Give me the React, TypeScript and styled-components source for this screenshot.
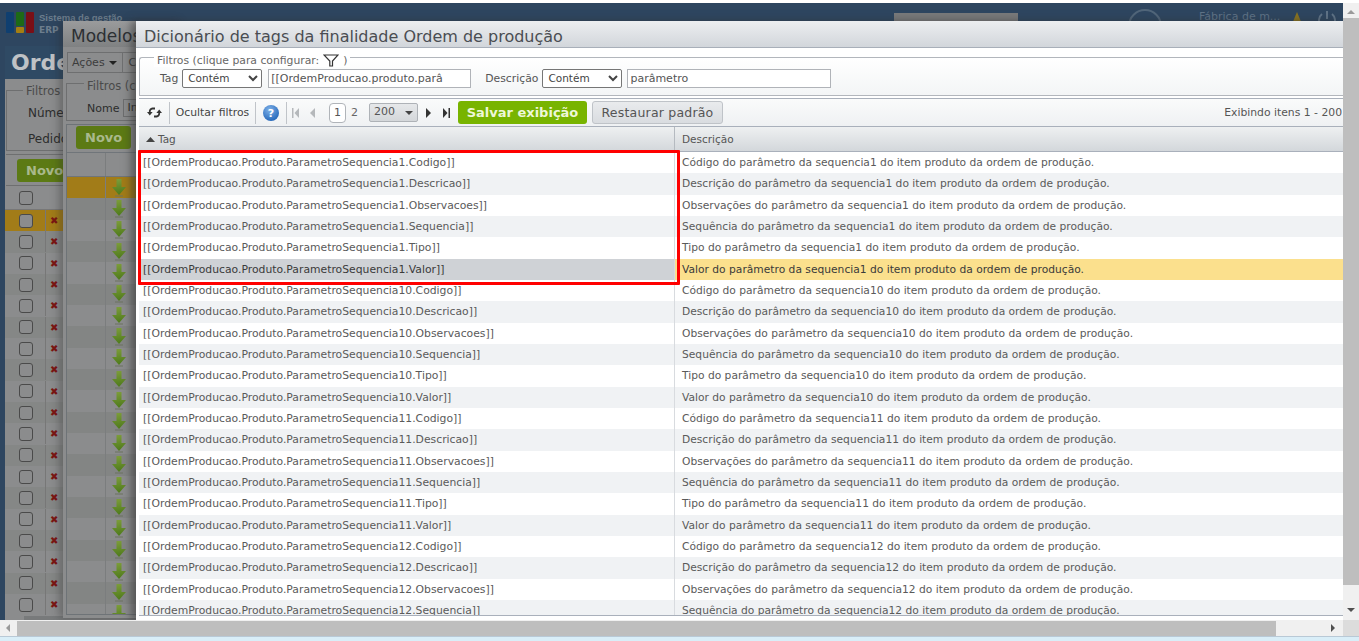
import React from "react";
import styled, { createGlobalStyle } from "styled-components";

const Global = createGlobalStyle`
  html, body { margin: 0; padding: 0; height: 100%; overflow: hidden; background: #fff; }
  body { font-family: "DejaVu Sans", Verdana, sans-serif; font-size: 11px; color: #555; }
  * { box-sizing: border-box; }
`;

const Screen = styled.div`
  width: 1359px; height: 641px; display: flex; flex-direction: column; overflow: hidden; background: #fff;
`;
const MainArea = styled.div`display: flex; flex: 1; min-height: 0;`;
const Viewport = styled.div`
  position: relative; flex: 1; margin-top: 3px; overflow: hidden; background: #2e4660;
`;

/* dimmed background page */
const TopBar = styled.div`
  height: 43px; display: flex; align-items: flex-start; padding: 9px 0 0 6px; gap: 5px; position: relative;
`;
const Logo = styled.div`display: flex; gap: 2px;`;
const LogoBar = styled.div<{ $c: string }>`width: 8px; height: 21px; border-radius: 1px; background: ${p => p.$c};`;
const LogoSplit = styled.div`
  width: 8px; height: 21px; display: flex; flex-direction: column; gap: 1px;
  i { display: block; flex: 1; background: #1d6a16; border-radius: 1px; }
  b { display: block; height: 6px; background: #a57f12; border-radius: 1px; }
`;
const Brand = styled.div`
  color: #6d7e8e; font-family: "Liberation Sans", sans-serif; font-weight: bold; font-size: 9.500px; line-height: 12px;
  strong { display: block; font-family: "DejaVu Sans", sans-serif; font-size: 9px; }
`;
const SearchStub = styled.div`
  position: absolute; left: 894px; top: 10px; width: 124px; height: 18px; background: #797a7b;
`;
const GlobeStub = styled.div`
  position: absolute; left: 1128px; top: 6px; width: 34px; height: 34px; border: 2px solid #51667a; border-radius: 50%;
`;
const Factory = styled.div`
  position: absolute; left: 1199px; top: 7px; color: #5f7387; font-size: 11px;
`;
const TopIcons = styled.svg`position: absolute; left: 1288px; top: 7px;`;

const BgPage = styled.div`
  margin-left: 5px; height: 100%; background: #8b8c8d; overflow: hidden;
`;
const PageTitle = styled.div`
  height: 33px; background: #2f4a64; color: #bfc2c5; font-size: 22px; font-weight: bold; line-height: 33px; padding-left: 6px;
`;
const BgFilter = styled.div`
  margin: 11px 0 0 1px; height: 61px; border: 1px solid #6e6f70; position: relative; padding: 9px 0 0 21px; color: #2c2c2c; font-size: 12px; line-height: 26px;
  span { position: absolute; left: 16px; top: -7px; line-height: 14px; background: #8b8c8d; padding: 0 3px; color: #4a4a4a; font-size: 11.500px; }
`;
const BgToolbar = styled.div`margin-top: 3px; padding: 4px 0 3px 11px; border-bottom: 1px solid #6e6f70; border-top: 1px solid #6e6f70; margin-left: 1px;`;
const GreenBtn = styled.div`
  display: block; width: 55px; height: 23px; border-radius: 3px; background: #5c7a14; color: #a9b98c;
  font-size: 13px; font-weight: bold; line-height: 23px; padding-left: 9px;
`;
const BgHead = styled.div`height: 24px; border-bottom: 1px solid #777; display: flex; align-items: center; padding-left: 14px;`;
const BgBox = styled.span`
  display: inline-block; flex: none; width: 14px; height: 14px; border: 1px solid #4a4a4a; border-radius: 3px; background: #8b8c8d;
`;
const BgRow = styled.div<{ $i: number; $sel?: boolean }>`
  height: 21.33px; display: flex; align-items: center; padding-left: 14px;
  background: ${p => p.$sel ? "#a27c18" : p.$i % 2 ? "#858786" : "#8b8c8d"};
`;
const RedX = styled.span`
  margin-left: 12px; padding-left: 4px; height: 21px; line-height: 21px; border-left: 1px solid #777;
  color: #7c1512; font-size: 10px; font-weight: bold;
`;
const BgFooter = styled.div`margin: 1px 0 0 19px; height: 6px; background: #787a7b;`;

/* background window */
const WindowBack = styled.div`
  position: absolute; left: 63px; top: 18px; width: 120px; height: 597px; background: #8b8c8d;
  box-shadow: -4px 0 8px rgba(40,40,40,.35); overflow: hidden;
`;
const BackTitle = styled.div`
  height: 26px; background: linear-gradient(#9a9b9c, #7f8182); color: #2c2f33; font-size: 17px; line-height: 31px; padding-left: 8px; white-space: nowrap;
`;
const BackActions = styled.div`
  margin: 5px 0 0 4px; height: 21px; border: 1px solid #6e6f70; color: #3c3c3c; font-size: 11px; padding-left: 4px; white-space: nowrap;
  display: flex; align-items: center;
`;
const Caret = styled.i`
  margin: 0 0 0 4px; border: 4px solid transparent; border-top: 4px solid #222; border-bottom: none; width: 8px; height: 4px;
`;
const ActionSep = styled.span`margin-left: 5px; height: 19px; padding-left: 6px; line-height: 19px; border-left: 1px solid #6e6f70;`;
const BackFilter = styled.div`
  margin: 10px 0 0 3px; height: 38px; border: 1px solid #6e6f70; position: relative; padding: 12px 0 0 20px; color: #2c2c2c; font-size: 11px; white-space: nowrap;
  display: flex; align-items: center; gap: 4px;
  span { position: absolute; left: 17px; top: -5px; background: #8b8c8d; padding: 0 3px; color: #4a4a4a; font-size: 11.500px; }
`;
const BackInput = styled.b`
  font-weight: normal; width: 30px; height: 18px; border: 1px solid #6c6d6e; padding-left: 3px; line-height: 16px;
`;
const BackTable = styled.div`
  margin: 3px 0 0 3px; height: 491px; overflow: hidden; border: 1px solid #6e7377; border-right: none;
`;
const BackTool = styled.div`padding: 1px 0 3px 9px; height: 27px;`;
const BackRow = styled.div<{ $i: number; $sel?: boolean }>`
  height: 21.33px; display: flex; align-items: center;
  background: ${p => p.$sel ? "#a27c18" : p.$i % 2 ? "#838584" : "#8b8c8d"};
`;
const BackCell = styled.div`
  flex: none; width: 39px; height: 100%; border-right: 1px solid #7b7d7e; margin-right: 6px;
`;
const BackHead = styled.div`height: 25px; border-top: 1px solid #70757a; border-bottom: 1px solid #70757a; display: flex;`;

/* main window */
const Dialog = styled.div`
  position: absolute; left: 136px; top: 18px; right: 0; height: 599px; background: #fff;
  box-shadow: -5px 0 8px rgba(45,45,45,.55); display: flex; flex-direction: column; overflow: hidden;
`;
const TitleBar = styled.div`
  height: 27px; flex: none; padding-left: 8px; background: linear-gradient(#eceef0, #d2d6db); border-bottom: 1px solid #a8afb9;
  color: #4a4d52; font-size: 16px; line-height: 31px; white-space: nowrap;
`;
const Body = styled.div`flex: 1; min-height: 0; padding: 9px 0 4px 3px; display: flex; flex-direction: column;`;
const FilterBox = styled.div`
  flex: none; position: relative; height: 39px; border: 1px solid #b2b6bc; border-right: none; border-radius: 3px 0 0 0;
  background: linear-gradient(#fff, #f3f5f6); display: flex; align-items: center; padding: 3px 0 0 20px;
`;
const Legend = styled.div`
  position: absolute; left: 14px; top: -4px; padding: 0 3px; background: #fff; line-height: 12px; color: #666; font-size: 10.800px;
  display: flex; align-items: center; gap: 4px;
`;
const FieldLabel = styled.label<{ $gap?: number }>`color: #555; font-size: 10.800px; margin: 0 4px 0 ${p => p.$gap || 0}px;`;
const OpSelect = styled.select`
  width: 80px; height: 19px; font: 10.500px "DejaVu Sans", sans-serif; color: #444; border: 1px solid #767676; border-radius: 2px;
  background: #fff; padding: 0 0 0 1px; margin: 0;
`;
const TextInput = styled.input<{ $w: number; $gap: number }>`
  width: ${p => p.$w}px; height: 19px; margin-left: ${p => p.$gap}px; font: 11px "DejaVu Sans", sans-serif; color: #555; border: 1px solid #b0b3b8;
  padding: 0 2px; background: #fff; outline: none;
`;
const Toolbar = styled.div`
  flex: none; height: 29px; margin-top: 2px; border-top: 1px solid #a9b0bb; border-bottom: 1px solid #a9b0bb;
  background: linear-gradient(#fafbfb, #eff1f3); display: flex; align-items: center; position: relative;
`;
const ToolCell = styled.div<{ $w: number }>`
  width: ${p => p.$w}px; height: 22px; flex: none; border-right: 1px solid #c0c4c9; display: flex; align-items: center; justify-content: center;
  color: #444; font-size: 10.800px; white-space: nowrap;
`;
const PagerIcon = styled.svg<{ $gap: number }>`flex: none; margin-left: ${p => p.$gap}px;`;
const PageBox = styled.div`
  width: 17px; height: 20px; margin-left: 12px; flex: none; border: 1px solid #b0b4b9; border-radius: 4px; background: #fff; color: #555;
  text-align: center; line-height: 18px; font-size: 11px;
`;
const PageNum = styled.span`margin-left: 5px; width: 10px; color: #666; font-size: 11px;`;
const SizeBox = styled.div`
  width: 49px; height: 19px; margin-left: 8px; flex: none; border: 1px solid #aeb2b7; border-radius: 2px; background: linear-gradient(#e6e8ea,#d4d7da);
  color: #555; font-size: 11px; line-height: 15px; padding-left: 4px; position: relative;
  &:after { content: ""; position: absolute; right: 4px; top: 7px; border: 4px solid transparent; border-top: 4px solid #444; border-bottom: none; }
`;
const SaveBtn = styled.button`
  width: 129px; height: 23px; margin-left: 8px; flex: none; border: none; border-radius: 3px; background: #78b400; color: #eef7d8;
  font: bold 13px "DejaVu Sans", sans-serif; padding: 0;
`;
const ResetBtn = styled.button`
  width: 131px; height: 23px; margin-left: 5px; flex: none; border: 1px solid #bfc3c8; border-radius: 3px; background: linear-gradient(#e9ebed,#d9dce0); color: #555;
  font: 12.500px "DejaVu Sans", sans-serif; padding: 0; letter-spacing: .2px;
`;
const Info = styled.div`margin-left: auto; padding-right: 1px; color: #555; font-size: 10.800px; white-space: nowrap;`;

const Grid = styled.div`flex: 1; min-height: 0; overflow: hidden; border-bottom: 1px solid #a9b0bb;`;
const HeadRow = styled.div`
  height: 25px; display: grid; grid-template-columns: 536px 1fr; background: linear-gradient(#eef0f1, #d3d7db); border-bottom: 1px solid #a9b0bb;
`;
const HeadCell = styled.div`
  display: flex; align-items: center; gap: 3px; padding-left: 7px; color: #555; font-size: 10.500px; border-right: 1px solid #b5bac0;
  &:last-child { border-right: none; }
`;
const Row = styled.div<{ $odd: boolean }>`
  height: 21.33px; display: grid; grid-template-columns: 536px 1fr; background: ${p => p.$odd ? "#f0f2f4" : "#fff"};
`;
const Cell = styled.div<{ $bg?: string }>`
  padding-left: 4px; line-height: 22px; white-space: nowrap; overflow: hidden; font-size: 10.800px; color: ${p => p.$bg ? "#3a3a3a" : "#5a5a5a"};
  background: ${p => p.$bg || "transparent"}; border-right: 1px solid #d8dbdf;
  &:last-child { border-right: none; padding-left: 7px; font-size: 10.700px; }
`;
const Highlight = styled.div`
  position: absolute; left: 2px; top: 129px; width: 542px; height: 135px; border: 3px solid #f00; pointer-events: none; border-radius: 1px;
`;

/* browser scrollbars */
const VScroll = styled.div`
  width: 16px; flex: none; margin-top: 3px; background: #f0f0f0; display: flex; flex-direction: column; align-items: center;
`;
const VThumb = styled.div`width: 16px; height: 567px; background: #bebebe; margin: 4px 0 auto; flex: none;`;
const ArrowUp = styled.div`
  margin-top: 7px; border: 4px solid transparent; border-bottom: 4px solid #9a9a9a; border-top: none; width: 8px; height: 4px; flex: none;
`;
const ArrowDown = styled.div`
  margin-bottom: 8px; border: 4px solid transparent; border-top: 4px solid #505050; border-bottom: none; width: 8px; height: 4px; flex: none;
`;
const HScroll = styled.div`height: 16px; flex: none; background: #f0f0f0; display: flex; align-items: center;`;
const HThumb = styled.div`margin-left: 17px; width: 1259px; height: 15px; background: #bebebe;`;
const ArrowLeft = styled.div`
  position: absolute; margin-left: 6px; border: 4px solid transparent; border-right: 4px solid #9a9a9a; border-left: none; width: 4px; height: 8px;
`;
const ArrowRight = styled.div`
  margin-left: 55px; border: 4px solid transparent; border-left: 4px solid #505050; border-right: none; width: 4px; height: 8px;
`;
const Corner = styled.div`margin-left: auto; width: 16px; height: 16px; background: #dcdcdc;`;
const Strip = styled.div`height: 5px; flex: none; background: #d9eef8; border-top: 1px solid #b9c9d6;`;

const DownArrow = ({ id }: { id: string }) => (
  <svg width="14" height="18" viewBox="0 0 14 18">
    <defs>
      <linearGradient id={id} x1="0" y1="0" x2="0" y2="1">
        <stop offset="0" stopColor="#7c9c3a" />
        <stop offset="1" stopColor="#4d7a1a" />
      </linearGradient>
    </defs>
    <path d="M4.500 0h5v8H14l-7 8-7-8h4.500z" fill={`url(#${id})`} />
    <rect x="3" y="16.500" width="8" height="1" fill="#6d7360" />
  </svg>
);

const Filter = () => (
  <svg width="16" height="13" viewBox="0 0 16 13">
    <path d="M1 1h14L9.500 7v5H6.800V7z" fill="none" stroke="#333" strokeWidth="1.200" />
  </svg>
);

const Refresh = () => (
  <svg width="15" height="13" viewBox="0 0 15 13" fill="none" stroke="#333" strokeWidth="1.800">
    <path d="M8 2.500H5.500A3 3 0 0 0 2.800 6v1" />
    <path d="M0 6h5.600L2.800 9.500z" fill="#333" stroke="none" />
    <path d="M7 10.500h2.500A3 3 0 0 0 12.200 7V6" />
    <path d="M9.400 7H15l-2.800-3.500z" fill="#333" stroke="none" />
  </svg>
);

const Help = () => (
  <svg width="16" height="16" viewBox="0 0 16 16">
    <defs>
      <radialGradient id="hb" cx=".4" cy=".3" r=".8">
        <stop offset="0" stopColor="#7fb1e8" />
        <stop offset="1" stopColor="#1b5fb5" />
      </radialGradient>
    </defs>
    <circle cx="8" cy="8" r="8" fill="url(#hb)" />
    <text x="8" y="12" textAnchor="middle" fontSize="11" fontWeight="bold" fill="#fff" fontFamily="DejaVu Sans">?</text>
  </svg>
);

const Tri = ({ dir, bar, color, gap }: { dir: "l" | "r"; bar?: boolean; color: string; gap: number }) => (
  <PagerIcon $gap={gap} width="8" height="10" viewBox="0 0 8 10">
    {dir === "l" ? (
      <>
        {bar && <rect x="0" y="0" width="1.500" height="10" fill={color} />}
        <path d={bar ? "M7 0v10L2.500 5z" : "M6 0v10L1 5z"} fill={color} />
      </>
    ) : (
      <>
        <path d={bar ? "M1 0v10L5.500 5z" : "M2 0v10l5-5z"} fill={color} />
        {bar && <rect x="6.500" y="0" width="1.500" height="10" fill={color} />}
      </>
    )}
  </PagerIcon>
);

const seqs = ["1", "10", "11", "12"];
const fields: [string, string][] = [
  ["Codigo", "Código"],
  ["Descricao", "Descrição"],
  ["Observacoes", "Observações"],
  ["Sequencia", "Sequência"],
  ["Tipo", "Tipo"],
  ["Valor", "Valor"],
];
const rows = seqs.flatMap(s =>
  fields.map(([k, d]) => ({
    tag: `[[OrdemProducao.Produto.ParametroSequencia${s}.${k}]]`,
    desc: `${d} do parâmetro da sequencia${s} do item produto da ordem de produção.`,
  }))
).slice(0, 22);

const bgRows = Array.from({ length: 19 });
const backRows = Array.from({ length: 21 });

export default function App() {
  return (
    <Screen>
      <Global />
      <MainArea>
        <Viewport>
          <TopBar>
            <Logo>
              <LogoBar $c="#0f3f70" />
              <LogoSplit><i /><b /></LogoSplit>
              <LogoBar $c="#7a0f16" />
            </Logo>
            <Brand>Sistema de gestão<strong>ERP</strong></Brand>
            <SearchStub />
            <GlobeStub />
            <Factory>Fábrica de m...</Factory>
            <TopIcons width="50" height="16" viewBox="0 0 50 16">
              <path d="M9 2l5 12H4z" fill="#8a7420" />
              <path d="M34 4a8 8 0 1 0 10 0M39 1v8" fill="none" stroke="#5f7387" strokeWidth="2" />
            </TopIcons>
          </TopBar>
          <BgPage>
            <PageTitle>Orde</PageTitle>
            <BgFilter>
              <span>Filtros (</span>
              Númer<br />Pedido
            </BgFilter>
            <BgToolbar><GreenBtn>Novo</GreenBtn></BgToolbar>
            <BgHead><BgBox /></BgHead>
            {bgRows.map((_, i) => (
              <BgRow key={i} $i={i} $sel={i === 0}>
                <BgBox /><RedX>✖</RedX>
              </BgRow>
            ))}
            <BgFooter />
          </BgPage>
          <WindowBack>
            <BackTitle>Modelos</BackTitle>
            <BackActions>Ações<Caret /><ActionSep>C</ActionSep></BackActions>
            <BackFilter><span>Filtros (cli</span>Nome<BackInput>In</BackInput></BackFilter>
            <BackTable>
              <BackTool><GreenBtn>Novo</GreenBtn></BackTool>
              <BackHead><BackCell /></BackHead>
              {backRows.map((_, i) => (
                <BackRow key={i} $i={i} $sel={i === 0}>
                  <BackCell />
                  <DownArrow id={`da${i}`} />
                </BackRow>
              ))}
            </BackTable>
          </WindowBack>
          <Dialog>
            <TitleBar>Dicionário de tags da finalidade Ordem de produção</TitleBar>
            <Body>
              <FilterBox>
                <Legend>Filtros (clique para configurar: <Filter /> )</Legend>
                <FieldLabel>Tag</FieldLabel>
                <OpSelect defaultValue="c"><option value="c">Contém</option></OpSelect>
                <TextInput $w={203} $gap={6} readOnly value="[[OrdemProducao.produto.parâ" />
                <FieldLabel $gap={14}>Descrição</FieldLabel>
                <OpSelect defaultValue="c"><option value="c">Contém</option></OpSelect>
                <TextInput $w={204} $gap={5} readOnly value="parâmetro" />
              </FilterBox>
              <Toolbar>
                <ToolCell $w={31}><Refresh /></ToolCell>
                <ToolCell $w={86}>Ocultar filtros</ToolCell>
                <ToolCell $w={31}><Help /></ToolCell>
                <Tri dir="l" bar color="#b5b8bb" gap={5} />
                <Tri dir="l" color="#b5b8bb" gap={9} />
                <PageBox>1</PageBox>
                <PageNum>2</PageNum>
                <SizeBox>200</SizeBox>
                <Tri dir="r" color="#333" gap={6} />
                <Tri dir="r" bar color="#333" gap={10} />
                <SaveBtn>Salvar exibição</SaveBtn>
                <ResetBtn>Restaurar padrão</ResetBtn>
                <Info>Exibindo itens 1 - 200</Info>
              </Toolbar>
              <Grid>
                <HeadRow>
                  <HeadCell>
                    <svg width="9" height="5" viewBox="0 0 9 5"><path d="M0 5l4.500-5L9 5z" fill="#444" /></svg>
                    Tag
                  </HeadCell>
                  <HeadCell>Descrição</HeadCell>
                </HeadRow>
                {rows.map((r, i) => (
                  <Row key={r.tag} $odd={i % 2 === 1}>
                    <Cell $bg={i === 5 ? "#cfd2d6" : undefined}>{r.tag}</Cell>
                    <Cell $bg={i === 5 ? "#fbe08d" : undefined}>{r.desc}</Cell>
                  </Row>
                ))}
              </Grid>
            </Body>
            <Highlight />
          </Dialog>
        </Viewport>
        <VScroll>
          <ArrowUp />
          <VThumb />
          <ArrowDown />
        </VScroll>
      </MainArea>
      <HScroll>
        <ArrowLeft />
        <HThumb />
        <ArrowRight />
        <Corner />
      </HScroll>
      <Strip />
    </Screen>
  );
}
